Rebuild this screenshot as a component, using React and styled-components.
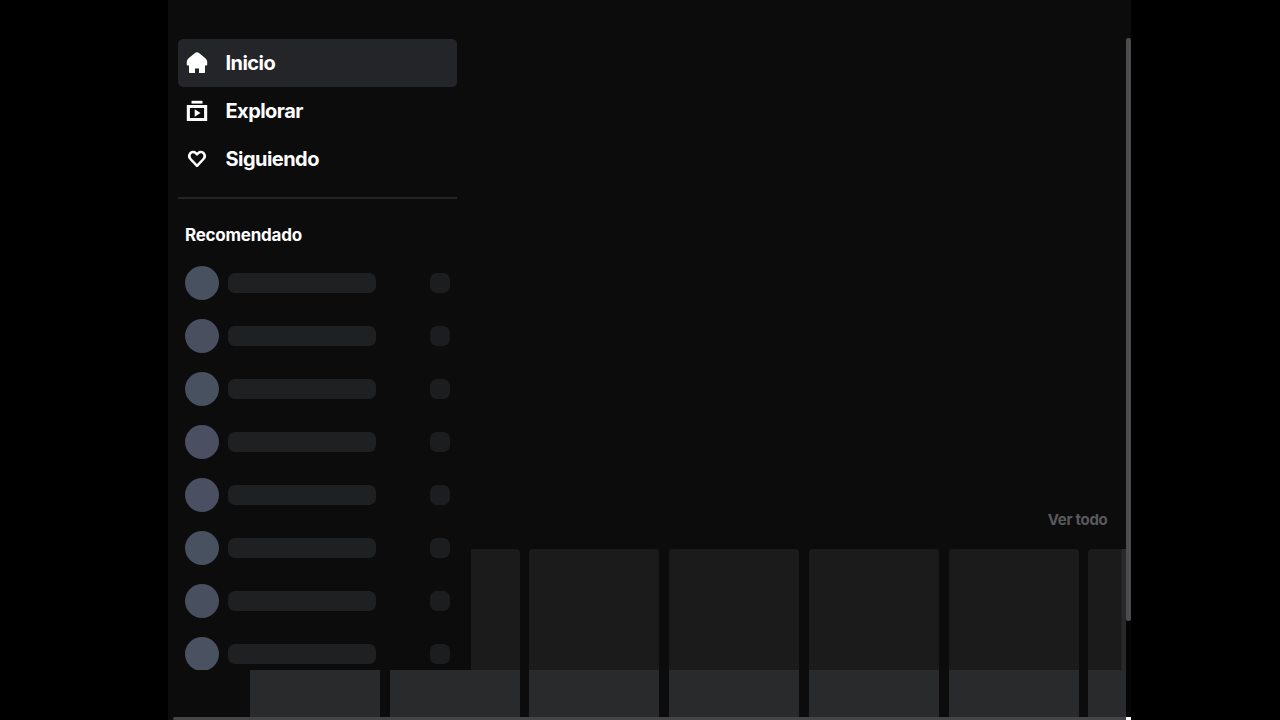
import styled, { createGlobalStyle } from "styled-components";

const GlobalStyle = createGlobalStyle`
  * {
    box-sizing: border-box;
  }
  body {
    margin: 0;
    background: #000;
    overflow: hidden;
    font-family: Inter, "Liberation Sans", sans-serif;
  }
`;

const Page = styled.div`
  width: 1280px;
  height: 720px;
  display: flex;
  padding-left: 168px;
  background: #000;
`;

const Main = styled.div`
  width: 958px;
  height: 720px;
  display: flex;
  flex-direction: column;
  background: #0c0c0c;
`;

const Top = styled.div`
  display: flex;
  height: 670px;
`;

const Sidebar = styled.div`
  width: 303px;
  height: 670px;
  padding: 39px 14px 0 10px;
  overflow: hidden;
`;

const NavItem = styled.div`
  width: 279px;
  height: 48px;
  display: flex;
  align-items: center;
  padding-left: 7px;
  gap: 16.5px;
  border-radius: 5px;
  background: ${(props) => (props.$active ? "#242528" : "none")};
  color: #fff;
  font-size: 20px;
  font-weight: 700;
  letter-spacing: -0.54px;
  line-height: 24px;
  svg {
    width: 24px;
    height: 24px;
    flex: none;
  }
`;

const Divider = styled.div`
  width: 279px;
  height: 2px;
  margin-top: 14px;
  background: #252526;
`;

const Title = styled.div`
  margin: 26px 0 0 7px;
  color: #fff;
  font-size: 17px;
  font-weight: 700;
  letter-spacing: -0.24px;
  line-height: 20px;
`;

const Channels = styled.div`
  display: flex;
  flex-direction: column;
  gap: 19px;
  margin-top: 21px;
  padding: 0 7px 0 7px;
`;

const Channel = styled.div`
  width: 265px;
  height: 34px;
  display: flex;
  align-items: center;
`;

const Avatar = styled.div`
  width: 34px;
  height: 34px;
  border-radius: 50%;
  background: ${(props) => props.$color};
`;

const Name = styled.div`
  width: 148.4px;
  height: 20px;
  margin-left: 9px;
  border-radius: 7px;
  background: #1f2022;
`;

const Viewers = styled.div`
  width: 20px;
  height: 20px;
  margin-left: auto;
  border-radius: 7px;
  background: #1c1d1f;
`;

const Content = styled.div`
  width: 655px;
  height: 670px;
  display: flex;
  flex-direction: column;
  justify-content: flex-end;
  overflow: hidden;
`;

const SeeAll = styled.div`
  align-self: flex-end;
  margin: 0 18.5px 19px 0;
  color: #59595c;
  font-size: 15px;
  font-weight: 700;
  letter-spacing: -0.3px;
  line-height: 20px;
`;

const Cards = styled.div`
  display: flex;
  gap: 9.75px;
  height: 121px;
  overflow: hidden;
`;

const Card = styled.div`
  width: ${(props) => props.$width || 130}px;
  height: 100%;
  flex: none;
  background: ${(props) =>
    props.$last
      ? "linear-gradient(to right, #1b1b1c 33px, #29292b 34px)"
      : "#1b1b1c"};
  border-radius: ${(props) => (props.$cut ? "0 4px 0 0" : "4px 4px 0 0")};
`;

const Strip = styled(Cards)`
  height: 47px;
  padding-left: 81.9px;
`;

const StripCard = styled.div`
  width: 130px;
  height: 47px;
  flex: none;
  background: #292a2c;
`;

const BottomBar = styled.div`
  height: 3px;
  margin-left: 5px;
  border-radius: 2px 0 0 2px;
  background: #454547;
`;

const Scrollbar = styled.div`
  width: 5px;
  height: 720px;
  display: flex;
  flex-direction: column;
  background: #050505;
`;

const TrackTop = styled.div`
  height: 38px;
  background: #0c0c0c;
`;

const Thumb = styled.div`
  height: 583px;
  border-radius: 2px;
  background: #4c4c4e;
`;

const Corner = styled.div`
  height: 3px;
  margin-top: auto;
  background: #fff;
`;

const HomeIcon = () => (
  <svg viewBox="0 0 24 24" fill="#fff">
    <path d="M10 2 C11.2 1.1 12.8 1.1 14 2 L19.8 6.8 C21.3 8.1 22.2 9.4 22.2 10.8 V13.4 C22.2 14 21.8 14.4 21.2 14.4 H20 V21 C20 21.6 19.6 22 19 22 H14 V17.4 H10 V22 H5 C4.4 22 4 21.6 4 21 V14.4 H2.8 C2.2 14.4 1.8 14 1.8 13.4 V10.8 C1.8 9.4 2.7 8.1 4.2 6.8 Z" />
  </svg>
);

const ExploreIcon = () => (
  <svg viewBox="0 0 24 24" fill="#fff">
    <path d="M6.5 1.8 H17.5 V4.6 H6.5 Z" />
    <path
      fillRule="evenodd"
      d="M1.8 6 H22.2 V22 H1.8 Z M4.9 9 V19.1 H19.1 V9 Z"
    />
    <path d="M9.7 10.2 L15.5 14 L9.7 17.8 Z" />
  </svg>
);

const HeartIcon = () => (
  <svg
    viewBox="0 0 24 24"
    fill="none"
    stroke="#fff"
    strokeWidth="2.5"
    strokeLinejoin="round"
  >
    <path d="M12 7.4 L10.8 6.2 C9.1 4.6 6.6 4.7 5.2 6.4 C3.9 8.1 4 10.4 5.5 12 L12 18.8 L18.5 12 C20 10.4 20.1 8.1 18.8 6.4 C17.4 4.7 14.9 4.6 13.2 6.2 Z" />
  </svg>
);

const colors = [
  "#47515f",
  "#4a4f60",
  "#47515f",
  "#4a5062",
  "#4a5062",
  "#475160",
  "#485060",
  "#4a5262",
];

function App() {
  return (
    <>
      <GlobalStyle />
      <Page>
        <Main>
          <Top>
            <Sidebar>
              <NavItem $active>
                <HomeIcon />
                <span>Inicio</span>
              </NavItem>
              <NavItem>
                <ExploreIcon />
                <span>Explorar</span>
              </NavItem>
              <NavItem>
                <HeartIcon />
                <span>Siguiendo</span>
              </NavItem>
              <Divider />
              <Title>Recomendado</Title>
              <Channels>
                {colors.map((color, index) => (
                  <Channel key={index}>
                    <Avatar $color={color} />
                    <Name />
                    <Viewers />
                  </Channel>
                ))}
              </Channels>
            </Sidebar>
            <Content>
              <SeeAll>Ver todo</SeeAll>
              <Cards>
                <Card $width={48.5} $cut />
                <Card />
                <Card />
                <Card />
                <Card />
                <Card $last />
              </Cards>
            </Content>
          </Top>
          <Strip>
            {[1, 2, 3, 4, 5, 6, 7].map((item) => (
              <StripCard key={item} />
            ))}
          </Strip>
          <BottomBar />
        </Main>
        <Scrollbar>
          <TrackTop />
          <Thumb />
          <Corner />
        </Scrollbar>
      </Page>
    </>
  );
}

export default App;
